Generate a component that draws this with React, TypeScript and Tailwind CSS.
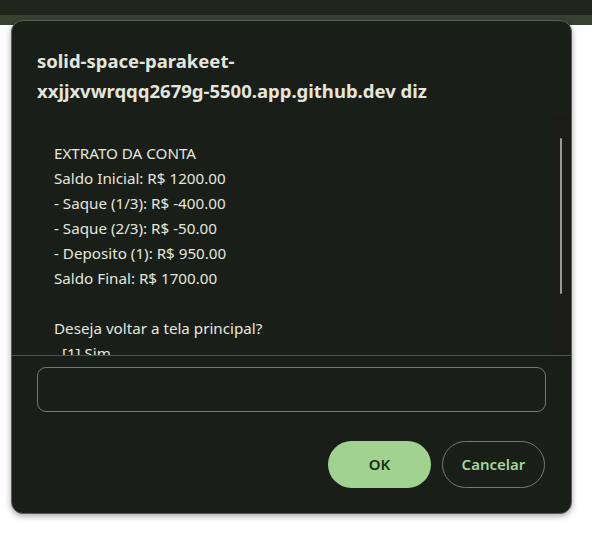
const lines = [
  "EXTRATO DA CONTA",
  "Saldo Inicial: R$ 1200.00",
  "- Saque (1/3): R$ -400.00",
  "- Saque (2/3): R$ -50.00",
  "- Deposito (1): R$ 950.00",
  "Saldo Final: R$ 1700.00",
  " ",
  "Deseja voltar a tela principal?",
  "  [1] Sim",
];

export default function App() {
  return (
    <div className="relative h-[552px] w-[592px] overflow-hidden bg-white font-['Noto_Sans',sans-serif]">
      <div className="h-[15px] bg-[#1f271c]" />
      <div className="h-[10px] bg-[#374233]" />

      <div className="absolute left-[11px] top-[20px] flex h-[494px] w-[561px] flex-col rounded-[12px] border border-[#5a5f57] bg-[#1a1e18] shadow-[0_2px_6px_rgba(0,0,0,0.35)]">
        <h1 className="px-[25px] pt-[25px] text-[18.5px] font-bold leading-[30px] text-[#e4e6de]">
          solid-space-parakeet-
          <br />
          xxjjxvwrqqq2679g-5500.app.github.dev diz
        </h1>

        <div className="mt-[10px] flex h-[239px] overflow-hidden">
          <div className="flex-1 overflow-hidden pl-[42px] pt-[25px] text-[15.2px] leading-[25px] text-[#e4e6de]">
            {lines.map((l, i) => (
              <div key={i} className="whitespace-pre">
                {l}
              </div>
            ))}
          </div>
          <div className="flex w-[21px] justify-center bg-[#1b1c1a] pt-[22px]">
            <div className="h-[156px] w-[2px] rounded-full bg-[#9a9a96]" />
          </div>
        </div>

        <div className="h-px bg-[#4a5345]" />

        <div className="px-[25px] pt-[11px]">
          <div className="h-[45px] rounded-[9px] border border-[#737a6e] bg-[#1a1e18]" />
        </div>

        <div className="flex justify-end gap-[11px] px-[26px] pt-[29px]">
          <button className="h-[47px] w-[103px] rounded-full bg-[#a0d38f] text-[15px] font-semibold text-[#1c2e17]">
            OK
          </button>
          <button className="h-[47px] w-[103px] rounded-full border border-[#747b6f] text-[15px] font-semibold text-[#a4d69a]">
            Cancelar
          </button>
        </div>
      </div>
    </div>
  );
}
